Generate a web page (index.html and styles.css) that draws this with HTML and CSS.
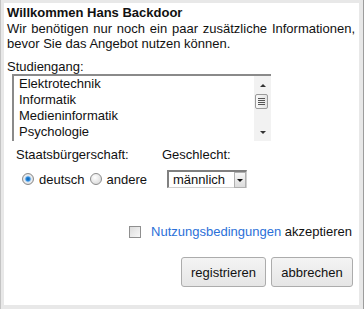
FILE: index.html
```html
<!DOCTYPE html>
<html lang="de">
<head>
    <meta charset="UTF-8">
    <title>Registrierung</title>
    <link rel="stylesheet" href="styles.css">
</head>
<body>
    <div class="frame">
        <div class="dialog">
            <div class="title">Willkommen Hans Backdoor</div>
            <p class="intro">Wir benötigen nur noch ein paar zusätzliche Informationen, bevor Sie das Angebot nutzen können.</p>
            <div class="label">Studiengang:</div>
            <div class="listbox">
                <div class="options">
                    <div class="option">Elektrotechnik</div>
                    <div class="option">Informatik</div>
                    <div class="option">Medieninformatik</div>
                    <div class="option">Psychologie</div>
                </div>
                <div class="scrollbar">
                    <span class="arrow up"></span>
                    <span class="thumb"><i></i><i></i><i></i><i></i></span>
                    <span class="arrow down"></span>
                </div>
            </div>
            <div class="fields">
                <div class="field">
                    <div class="field-label">Staatsbürgerschaft:</div>
                    <div class="field-row">
                        <span class="radio checked"></span><span class="radio-text">deutsch</span>
                        <span class="radio"></span><span class="radio-text">andere</span>
                    </div>
                </div>
                <div class="field">
                    <div class="field-label">Geschlecht:</div>
                    <div class="field-row">
                        <div class="select">
                            <span class="select-value">männlich</span>
                            <span class="select-button"></span>
                        </div>
                    </div>
                </div>
            </div>
            <div class="terms">
                <span class="checkbox"></span>
                <a href="#" class="link">Nutzungsbedingungen</a>&nbsp;akzeptieren
            </div>
            <div class="actions">
                <button class="button register">registrieren</button>
                <button class="button cancel">abbrechen</button>
            </div>
        </div>
    </div>
</body>
</html>
```

FILE: styles.css
```css
body {
    margin: 0;
    font-family: "Liberation Sans", Arial, sans-serif;
    font-size: 13px;
    color: #111;
}
.frame {
    width: 364px;
    height: 309px;
    box-sizing: border-box;
    padding: 3px 4px 4px 3px;
    background-color: #e8e8e8;
    border-left: 1px solid #c4c4c4;
    border-right: 1px solid #9c9c9c;
}
.dialog {
    height: 100%;
    box-sizing: border-box;
    padding: 2px 4px 0 3px;
    background-color: #fff;
}
.title {
    font-weight: bold;
    line-height: 15px;
}
.intro {
    margin: 1px 0 0;
    line-height: 15px;
    text-align: justify;
}
.label {
    margin-top: 8px;
    line-height: 15px;
}
.listbox {
    display: flex;
    width: 259px;
    height: 67px;
    box-sizing: border-box;
    margin-left: 5px;
    border-top: 2px solid #8a8a8a;
    border-left: 2px solid #8a8a8a;
    background-color: #fff;
}
.options {
    flex: 1;
    padding-left: 5px;
}
.option {
    line-height: 16px;
    height: 16px;
}
.scrollbar {
    position: relative;
    width: 17px;
    background-color: #f2f2f2;
}
.arrow {
    position: absolute;
    left: 6px;
    width: 0;
    height: 0;
    border-left: 3px solid transparent;
    border-right: 3px solid transparent;
}
.arrow.up {
    top: 8px;
    border-bottom: 3px solid #333;
}
.arrow.down {
    bottom: 7px;
    border-top: 3px solid #333;
}
.thumb {
    position: absolute;
    top: 18px;
    left: 1px;
    width: 11px;
    height: 13px;
    border: 1px solid #9a9a9a;
    border-radius: 2px;
    background: linear-gradient(to right, #f8f8f8, #e4e4e4);
    display: flex;
    flex-direction: column;
    justify-content: center;
    gap: 1px;
    align-items: center;
}
.thumb i {
    display: block;
    width: 7px;
    height: 1px;
    background-color: #555;
}
.fields {
    display: flex;
    margin-top: 6px;
    padding-left: 9px;
}
.field:first-child {
    width: 146px;
}
.field-label {
    line-height: 15px;
}
.field-row {
    display: flex;
    align-items: center;
    height: 20px;
    margin-top: 7px;
}
.radio {
    width: 10px;
    height: 10px;
    margin-left: 6px;
    border: 1px solid #8c8c8c;
    border-radius: 50%;
    background: radial-gradient(circle at 40% 35%, #fff, #d2d2d2);
}
.radio.checked {
    background: radial-gradient(circle, #0a5fa8 0, #2a8ae0 2px, #bcd7ef 3px, #f4f4f4 4px, #d6d6d6 5px);
}
.radio + .radio-text {
    margin-left: 5px;
}
.radio-text + .radio {
    margin-left: 5px;
}
.select {
    display: flex;
    align-items: center;
    width: 80px;
    height: 18px;
    box-sizing: border-box;
    margin-left: 5px;
    border: 1px solid #808080;
    border-right-color: #d0d0d0;
    border-bottom-color: #d0d0d0;
    border-top-width: 2px;
    border-left-width: 2px;
}
.select-value {
    flex: 1;
    padding-left: 4px;
    font-size: 13px;
}
.select-button {
    position: relative;
    width: 10px;
    height: 14px;
    border: 1px solid #b0b0b0;
    background: linear-gradient(#f6f6f6, #dcdcdc);
}
.select-button::after {
    content: "";
    position: absolute;
    top: 6px;
    left: 2px;
    border-left: 3px solid transparent;
    border-right: 3px solid transparent;
    border-top: 3px solid #111;
}
.terms {
    display: flex;
    align-items: center;
    justify-content: flex-end;
    margin-top: 35px;
    padding-right: 3px;
    line-height: 15px;
}
.checkbox {
    width: 10px;
    height: 10px;
    margin-right: 10px;
    border: 1px solid #8f8f8f;
    background: linear-gradient(135deg, #dcdcdc, #f8f8f8);
}
.link {
    color: #2b70d8;
    text-decoration: none;
}
.actions {
    display: flex;
    justify-content: flex-end;
    gap: 5px;
    margin-top: 18px;
    padding-right: 2px;
}
.button {
    height: 30px;
    padding: 0;
    font-family: "Liberation Sans", Arial, sans-serif;
    font-size: 13px;
    color: #111;
    border: 1px solid #acacac;
    border-radius: 3px;
    background: linear-gradient(#f4f4f4, #e6e6e6);
}
.register {
    width: 85px;
}
.cancel {
    width: 82px;
}
```
